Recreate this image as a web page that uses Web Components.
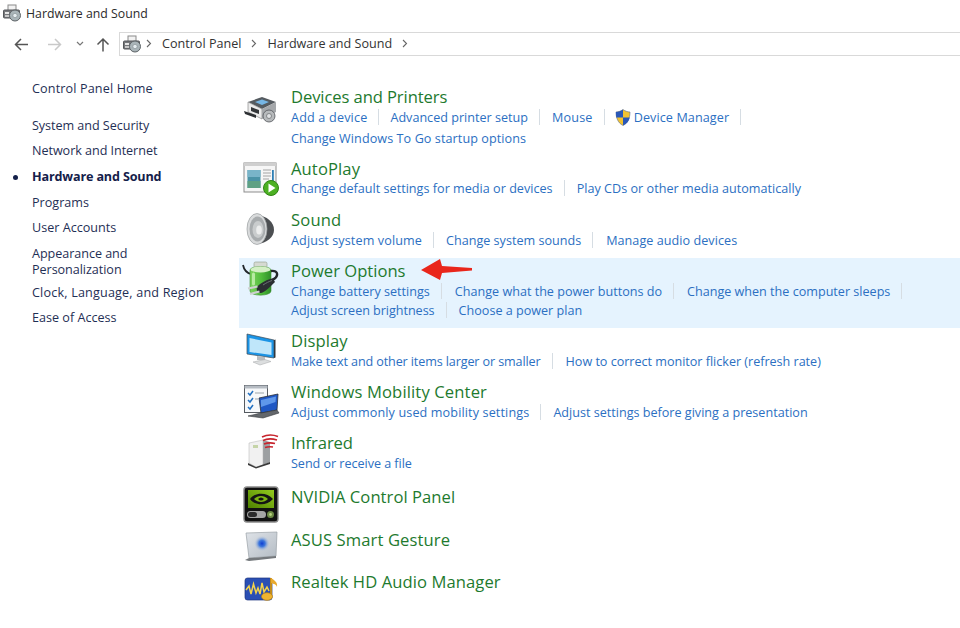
<!DOCTYPE html>
<html lang="en">
<head>
<meta charset="utf-8">
<title>Hardware and Sound</title>
<style>
    html, body { margin: 0; background: #fff; }
    body { font-family: 'Open Sans', 'Liberation Sans', sans-serif; width: 960px; height: 628px; overflow: hidden; }
</style>
</head>
<body>
<cp-window>
    <cp-titlebar slot="top" label="Hardware and Sound"></cp-titlebar>
    <cp-addressbar slot="top"></cp-addressbar>

    <cp-sidebar slot="side">
        <cp-nav-item home style="letter-spacing:.14px">Control Panel Home</cp-nav-item>
        <cp-nav-item style="letter-spacing:-.05px;padding-bottom:9px">System and Security</cp-nav-item>
        <cp-nav-item style="letter-spacing:-.05px">Network and Internet</cp-nav-item>
        <cp-nav-item active style="letter-spacing:-.15px">Hardware and Sound</cp-nav-item>
        <cp-nav-item style="padding-bottom:9px">Programs</cp-nav-item>
        <cp-nav-item>User Accounts</cp-nav-item>
        <cp-nav-item style="padding-bottom:7px;letter-spacing:-.05px">Appearance and<br>Personalization</cp-nav-item>
        <cp-nav-item style="letter-spacing:.18px;padding-bottom:9px">Clock, Language, and Region</cp-nav-item>
        <cp-nav-item>Ease of Access</cp-nav-item>
    </cp-sidebar>

    <cp-category heading="Devices and Printers" icon="devices" fit="-.1" style="height:72px">
        <cp-links>
            <cp-link sep style="letter-spacing:.18px">Add a device</cp-link>
            <cp-link sep style="margin-right:12px">Advanced printer setup</cp-link>
            <cp-link sep style="letter-spacing:.2px;margin-right:10px">Mouse</cp-link>
            <cp-link sep shield style="letter-spacing:.1px">Device Manager</cp-link>
        </cp-links>
        <cp-links style="margin-top:1px"><cp-link style="letter-spacing:.08px">Change Windows To Go startup options</cp-link></cp-links>
    </cp-category>

    <cp-category heading="AutoPlay" icon="autoplay" fit=".1" style="height:51px">
        <cp-links style="margin-top:-1px">
            <cp-link sep style="letter-spacing:.02px;margin-right:12px">Change default settings for media or devices</cp-link>
            <cp-link style="letter-spacing:.02px">Play CDs or other media automatically</cp-link>
        </cp-links>
    </cp-category>

    <cp-category heading="Sound" icon="sound" fit=".15" style="height:51px">
        <cp-links>
            <cp-link sep style="letter-spacing:.12px;margin-right:12px">Adjust system volume</cp-link>
            <cp-link sep style="margin-right:13px">Change system sounds</cp-link>
            <cp-link style="letter-spacing:.05px">Manage audio devices</cp-link>
        </cp-links>
    </cp-category>

    <cp-category heading="Power Options" icon="power" highlight style="height:70px">
        <cp-links>
            <cp-link sep style="margin-right:13px">Change battery settings</cp-link>
            <cp-link sep style="margin-right:13px">Change what the power buttons do</cp-link>
            <cp-link sep>Change when the computer sleeps</cp-link>
        </cp-links>
        <cp-links style="margin-top:-1px">
            <cp-link sep style="letter-spacing:-.04px;margin-right:12px">Adjust screen brightness</cp-link>
            <cp-link>Choose a power plan</cp-link>
        </cp-links>
        <svg slot="overlay" width="54" height="24" viewBox="0 0 54 24" aria-hidden="true">
            <path d="M1 12 20 1 22 8 52 10 52 12.500 22 15 20 22Z" fill="#e9261b"/>
        </svg>
    </cp-category>

    <cp-category heading="Display" icon="display" fit=".1" style="height:51px">
        <cp-links>
            <cp-link sep style="letter-spacing:-.12px;margin-right:13px">Make text and other items larger or smaller</cp-link>
            <cp-link style="letter-spacing:-.02px">How to correct monitor flicker (refresh rate)</cp-link>
        </cp-links>
    </cp-category>

    <cp-category heading="Windows Mobility Center" icon="mobility" fit=".13" style="height:51px">
        <cp-links>
            <cp-link sep style="letter-spacing:.13px;margin-right:12px">Adjust commonly used mobility settings</cp-link>
            <cp-link>Adjust settings before giving a presentation</cp-link>
        </cp-links>
    </cp-category>

    <cp-category heading="Infrared" icon="infrared" fit="-.1" style="height:54px">
        <cp-links><cp-link style="letter-spacing:-.04px">Send or receive a file</cp-link></cp-links>
    </cp-category>

    <cp-category heading="NVIDIA Control Panel" icon="nvidia" fit=".05" style="height:43px"></cp-category>
    <cp-category heading="ASUS Smart Gesture" icon="asus" fit=".1" style="height:42px"></cp-category>
    <cp-category heading="Realtek HD Audio Manager" icon="realtek" fit=".08" style="height:42px"></cp-category>
</cp-window>

<script>
const ICONS = {
    // small printer + disc used in the title and address bars
    hardware: `
        <rect x="6" y="1" width="8" height="6" fill="#f2f2f2" stroke="#8a8a8a"/>
        <rect x="1.500" y="6" width="16" height="8" rx="1" fill="#77797c" stroke="#55575a"/>
        <rect x="3" y="8" width="4" height="2" fill="#e6e6e6"/>
        <rect x="3" y="11" width="5" height="2" fill="#c8c8c8"/>
        <circle cx="13" cy="11.500" r="5.500" fill="#a9b4b8" stroke="#5e6467"/>
        <circle cx="13" cy="11.500" r="2.200" fill="#e4ecef" stroke="#7c8689" stroke-width=".6"/>`,
    devices: `
        <path d="M5 14 19 9 33 14 19 21Z" fill="#555b60"/>
        <path d="M12 14 19 11.500 26 14 19 17Z" fill="#76b6e4"/>
        <path d="M5 14 19 21V31L5 24Z" fill="#ececec" stroke="#7a7a7a" stroke-width=".6"/>
        <path d="M19 21 33 14V24L19 31Z" fill="#a5a8ab"/>
        <path d="M1 23 13 27V30L2 26Z" fill="#2d3033"/>
        <path d="M8 19 16 22V26L8 23Z" fill="#34373a"/>
        <circle cx="26" cy="28" r="6" fill="#b7babc" stroke="#53565a" stroke-width=".8"/>
        <circle cx="26" cy="28" r="2.500" fill="#e0e2e4" stroke="#66696c" stroke-width=".7"/>`,
    autoplay: `
        <rect x="1" y="3" width="32" height="29" fill="#f6f6f6" stroke="#8d8d8d"/>
        <rect x="1" y="3" width="32" height="3" fill="#cfcfcf"/>
        <rect x="4.500" y="10" width="13" height="18" fill="#4b93a7"/>
        <rect x="4.500" y="10" width="13" height="7" fill="#79b4c9"/>
        <rect x="4.500" y="21" width="13" height="7" fill="#5fa184"/>
        <path d="M20 10h8M20 13h8M20 16h8M20 19h6" stroke="#a3a3a3" stroke-width="1.100"/>
        <rect x="29" y="10" width="1.800" height="13" fill="#2f7fb5"/>
        <circle cx="28" cy="28" r="7.500" fill="#4cb022" stroke="#2f8414"/>
        <path d="M25.500 23.500 32.500 28 25.500 32.500Z" fill="#fff"/>`,
    sound: `
        <path d="M14 4C24 5 31 11 31 19 31 26 24 32 14 33Z" fill="#4c4f52"/>
        <ellipse cx="14" cy="18" rx="10" ry="15.500" fill="#d9dbdc" stroke="#9a9d9f" stroke-width=".7"/>
        <ellipse cx="14.500" cy="18" rx="8" ry="12.500" fill="#a8acae"/>
        <ellipse cx="15" cy="18.500" rx="5.500" ry="8.500" fill="#c9cccd"/>
        <ellipse cx="16" cy="19" rx="2.800" ry="4.500" fill="#eceded"/>`,
    power: `
        <linearGradient id="batt" x1="0" y1="0" x2="1" y2="0"><stop offset="0" stop-color="#7ed35f"/><stop offset=".55" stop-color="#4fbb3a"/><stop offset="1" stop-color="#2f8f2a"/></linearGradient>
        <path d="M0 3C1 8 4 11 8 12" fill="none" stroke="#23272b" stroke-width="1.800"/>
        <rect x="11" y="0" width="13" height="6" rx="1.500" fill="#d6dad2" stroke="#8f9a88" stroke-width=".6"/>
        <path d="M7 8C7 3.500 28 3.500 28 8V29C28 34.500 7 34.500 7 29Z" fill="url(#batt)" stroke="#3a8f2c" stroke-width=".6"/>
        <ellipse cx="17.500" cy="7.500" rx="10" ry="3" fill="#d4efc5"/>
        <path d="M10.500 12V22" stroke="#c9f3b5" stroke-width="3" stroke-linecap="round" opacity=".8"/>
        <path d="M29 18C36 15 36 8 28 9" fill="none" stroke="#23272b" stroke-width="2.400"/>
        <path d="M14 25C17 21 25 17 30 16.500L32 20C28 24 22 30 18 31 15 31.500 13 28 14 25Z" fill="#2b2e32"/>
        <path d="M20 23C23 21 26 19.500 29 18.500" stroke="#6d7175" stroke-width="1" fill="none"/>
        <path d="M14.500 24.500 5 26.500M16.500 29.500 7 32" stroke="#cfd1d2" stroke-width="2.200"/>`,
    display: `
        <path d="M4 2 31 8V26L4 22Z" fill="#1b94e6" stroke="#454b50" stroke-width=".7"/>
        <path d="M6.500 6 28.500 10.500V23L6.500 20Z" fill="#bfe6fa"/>
        <path d="M31 8 32.500 7.500V25.500L31 26Z" fill="#33383c"/>
        <path d="M14 24 22 25V28.500L14 28Z" fill="#b8bcbf"/>
        <path d="M10 30 22 27.500 28 29.500 17 33Z" fill="#dcdedf" stroke="#a4a6a8" stroke-width=".5"/>`,
    mobility: `
        <rect x="1.500" y="2.500" width="23" height="27" fill="#f6f8fa" stroke="#555a60"/>
        <rect x="1.500" y="2.500" width="23" height="3" fill="#b6bcc3"/>
        <path d="M5 10l2 2 3-4M5 17l2 2 3-4M5 24l2 2 3-4" fill="none" stroke="#1f6fc2" stroke-width="1.500"/>
        <path d="M12 10h9M12 16h3" stroke="#9ca3aa" stroke-width="1.200"/>
        <path d="M16 15 35 11 34 27 18 30Z" fill="#1f57c4" stroke="#2b2f36" stroke-width=".8"/>
        <path d="M18 17 33 13.500 32.500 19 18 24Z" fill="#5f97ea"/>
        <path d="M18 30 34 27 36 30 20 35 5 33Z" fill="#63676b" stroke="#34373a" stroke-width=".6"/>`,
    infrared: `
        <path d="M20 6 27 8V28L20 31Z" fill="#9da0a2"/>
        <path d="M6 9 20 6V31L13 33 6 29Z" fill="#f1f1f1" stroke="#b3b3b3" stroke-width=".5"/>
        <rect x="10" y="11" width="5" height="3" fill="#c5d4a8"/>
        <path d="M5 29 13 33 27 28 27 30 13 34.500 5 31Z" fill="#3a3a3a"/>
        <path d="M19 3C24 .500 30 .500 35 2.500M20 6.500C24 4.500 29 4.500 34 6M21 10C25 8.500 28 8.500 32 9.500M22 13.500C25 12.500 27 12.500 30 13" fill="none" stroke="#c7242d" stroke-width="1.600"/>`,
    nvidia: `
        <linearGradient id="nv" x1="1" y1="0" x2="0" y2="1"><stop offset="0" stop-color="#93c91e"/><stop offset="1" stop-color="#4f8200"/></linearGradient>
        <g transform="translate(0,-2)">
            <rect x="1" y="1" width="34" height="35" rx="3" fill="#111" stroke="#8a8a8a" stroke-width="1.400"/>
            <rect x="5" y="4" width="26" height="18" fill="url(#nv)"/>
            <path d="M7 13C12 6 24 6 30 13 24 20 12 20 7 13Z" fill="#141414"/>
            <path d="M11 13C15 9 21 9 25 13 21 17 15 17 11 13Z" fill="#7db312"/>
            <path d="M15 13C17 11 19 11 21 13 19 15 17 15 15 13Z" fill="#141414"/>
            <rect x="4" y="25" width="19" height="7" rx="3.500" fill="#a4a4a4"/>
            <rect x="5" y="26" width="9" height="5" rx="2.500" fill="#2b2b2b"/>
            <circle cx="27.500" cy="28.500" r="3.500" fill="#6c8a44"/>
            <circle cx="27.500" cy="28.500" r="1.400" fill="#b8d27f"/>
        </g>`,
    asus: `
        <linearGradient id="a" x1="0" y1="0" x2="1" y2="1"><stop offset="0" stop-color="#dfe3e8"/><stop offset="1" stop-color="#b4bcc4"/></linearGradient>
        <path d="M3 2 34 1 33 25 6 27Z" fill="url(#a)" stroke="#9aa0a6" stroke-width=".7"/>
        <path d="M3 2 6 27 2 29 6 30 33 27 33 25 6 27Z" fill="#74787c"/>
        <radialGradient id="g"><stop offset="0" stop-color="#0f3fd2"/><stop offset=".4" stop-color="#3f78dc"/><stop offset="1" stop-color="#c9d0d7" stop-opacity="0"/></radialGradient>
        <circle cx="19" cy="12.500" r="8" fill="url(#g)"/>`,
    realtek: `
        <rect x="2" y="5" width="27" height="22" rx="2.500" fill="#2a4fb4" stroke="#1c347e" stroke-width=".7"/>
        <path d="M3 17 6 13 8 21 10.500 11 13 20 15 15 17 21 19 10 21 19 24 14 26 18" fill="none" stroke="#f3d24a" stroke-width="1.500"/>
        <path d="M28 5V23" stroke="#c08a1c" stroke-width="2"/>
        <path d="M28 5C31 7 35 9 34 14 33 11 31 11 28 10Z" fill="#e8a92e"/>
        <ellipse cx="24" cy="23.500" rx="5.500" ry="3.800" fill="#efb32f" stroke="#b27c12" stroke-width=".7"/>`
};

class CpIcon extends HTMLElement {
    connectedCallback() {
        const size = this.getAttribute('size') || 36;
        this.attachShadow({ mode: 'open' }).innerHTML = `
            <style>:host { display: block; width: ${size}px; height: ${size}px; } svg { display: block; overflow: visible; }</style>
            <svg width="${size}" height="${size}" viewBox="0 0 ${size} ${size}" aria-hidden="true">${ICONS[this.getAttribute('name')] || ''}</svg>
        `;
    }
}

class CpWindow extends HTMLElement {
    constructor() {
        super();
        this.attachShadow({ mode: 'open' }).innerHTML = `
            <style>
                :host { display: block; width: 960px; height: 628px; }
                .body { display: grid; grid-template-columns: 239px 721px; }
                main { display: flex; flex-direction: column; padding-top: 24px; }
            </style>
            <slot name="top"></slot>
            <div class="body">
                <slot name="side"></slot>
                <main><slot></slot></main>
            </div>
        `;
    }
}

class CpTitlebar extends HTMLElement {
    connectedCallback() {
        this.attachShadow({ mode: 'open' }).innerHTML = `
            <style>
                :host { display: flex; align-items: center; height: 26px; padding-left: 2px; gap: 6px; font-size: 12.300px; color: #2b2b2b; }
            </style>
            <cp-icon name="hardware" size="18"></cp-icon>
            <span>${this.getAttribute('label')}</span>
        `;
    }
}

class CpAddressbar extends HTMLElement {
    constructor() {
        super();
        const chevron = `<svg class="chev" width="6" height="9" viewBox="0 0 6 9"><path d="M1 1l3.500 3.500L1 8" fill="none" stroke="#666" stroke-width="1.100"/></svg>`;
        this.attachShadow({ mode: 'open' }).innerHTML = `
            <style>
                :host { display: flex; align-items: center; height: 34px; font-size: 12.600px; color: #333; }
                .buttons { display: flex; align-items: center; width: 119px; box-sizing: border-box; padding-left: 14px; margin-top: 2px; }
                .buttons svg { display: block; }
                .bar { flex: 1; display: flex; align-items: center; height: 22px; margin-top: 2px; border: 1px solid #d9d9d9; border-right: 0; padding-left: 2px; }
                .chev { margin: 0 10px; flex: none; }
                .crumbs { display: flex; align-items: center; margin: -2px 0 0 -4px; }
            </style>
            <div class="buttons">
                <svg width="15" height="13" viewBox="0 0 15 13" style="margin-right:18px"><path d="M14 6.500H2M7 1 1.500 6.500 7 12" fill="none" stroke="#555" stroke-width="1.500"/></svg>
                <svg width="15" height="13" viewBox="0 0 15 13" style="margin-right:14px"><path d="M1 6.500H13M8 1 13.500 6.500 8 12" fill="none" stroke="#c9c9c9" stroke-width="1.500"/></svg>
                <svg width="8" height="6" viewBox="0 0 8 6" style="margin-right:12px"><path d="M1 1l3 3 3-3" fill="none" stroke="#777" stroke-width="1.200"/></svg>
                <svg width="14" height="15" viewBox="0 0 14 15"><path d="M7 14.500V2M1.500 7.500 7 2l5.500 5.500" fill="none" stroke="#555" stroke-width="1.500"/></svg>
            </div>
            <div class="bar">
                <cp-icon name="hardware" size="18"></cp-icon>
                <div class="crumbs">
                    ${chevron}<span>Control Panel</span>${chevron}<span>Hardware and Sound</span>${chevron}
                </div>
            </div>
        `;
    }
}

class CpSidebar extends HTMLElement {
    constructor() {
        super();
        this.attachShadow({ mode: 'open' }).innerHTML = `
            <style>
                :host { display: block; padding-top: 21px; }
            </style>
            <slot></slot>
        `;
    }
}

class CpNavItem extends HTMLElement {
    constructor() {
        super();
        this.attachShadow({ mode: 'open' }).innerHTML = `
            <style>
                :host { display: block; position: relative; padding: 0 0 10px 32px; font-size: 12.600px; line-height: 16px; color: #1f2f55; }
                :host([home]) { padding-bottom: 21px; }
                :host([active]) { font-weight: 700; color: #14204a; }
                :host([active])::before {
                    content: ''; position: absolute; left: 13px; top: 6px;
                    width: 5px; height: 5px; border-radius: 50%; background: #14204a;
                }
            </style>
            <slot></slot>
        `;
    }
}

class CpCategory extends HTMLElement {
    connectedCallback() {
        const fit = this.getAttribute('fit') || 0;
        this.attachShadow({ mode: 'open' }).innerHTML = `
            <style>
                :host { display: flex; position: relative; box-sizing: border-box; padding: 3px 0 0 4px; gap: 12px; }
                :host([highlight]) { background: #e5f3fe; }
                cp-icon { margin-top: 1px; flex: none; }
                h2 { margin: 0; font-size: 16.600px; line-height: 20px; font-weight: 400; letter-spacing: ${fit}px; color: #1e7a2e; white-space: nowrap; }
                .overlay { position: absolute; left: 181px; top: 0; }
            </style>
            <cp-icon name="${this.getAttribute('icon')}"></cp-icon>
            <div>
                <h2>${this.getAttribute('heading')}</h2>
                <slot></slot>
            </div>
            <div class="overlay"><slot name="overlay"></slot></div>
        `;
    }
}

class CpLinks extends HTMLElement {
    constructor() {
        super();
        this.attachShadow({ mode: 'open' }).innerHTML = `
            <style>
                :host { display: flex; height: 20px; align-items: center; }
            </style>
            <slot></slot>
        `;
    }
}

class CpLink extends HTMLElement {
    connectedCallback() {
        const shield = this.hasAttribute('shield') ? `
            <svg width="16" height="17" viewBox="0 0 16 17" style="margin-right:3px;flex:none">
                <path d="M8 .500C10 2 12.500 3 15 3 15 9 13 14 8 16.500 3 14 1 9 1 3 3.500 3 6 2 8 .500Z" fill="#f2c230" stroke="#5a6e96" stroke-width=".6"/>
                <path d="M8 .500V8.500H1.300C1 7 1 5 1 3 3.500 3 6 2 8 .500Z" fill="#2a58b8"/>
                <path d="M8 8.500H14.700C14 12 12 15 8 16.500Z" fill="#2a58b8"/>
            </svg>` : '';
        this.attachShadow({ mode: 'open' }).innerHTML = `
            <style>
                :host { display: inline-flex; align-items: center; height: 20px; font-size: 12.600px; color: #2b6fc2; white-space: nowrap; }
                :host([sep]) { padding-right: 12px; margin-right: 11px; position: relative; }
                :host([sep])::after {
                    content: ''; position: absolute; right: 0; top: 2px; height: 16px; width: 1px; background: #d6dde3;
                }
            </style>
            ${shield}<slot></slot>
        `;
    }
}

customElements.define('cp-icon', CpIcon);
customElements.define('cp-window', CpWindow);
customElements.define('cp-titlebar', CpTitlebar);
customElements.define('cp-addressbar', CpAddressbar);
customElements.define('cp-sidebar', CpSidebar);
customElements.define('cp-nav-item', CpNavItem);
customElements.define('cp-category', CpCategory);
customElements.define('cp-links', CpLinks);
customElements.define('cp-link', CpLink);
</script>
</body>
</html>
